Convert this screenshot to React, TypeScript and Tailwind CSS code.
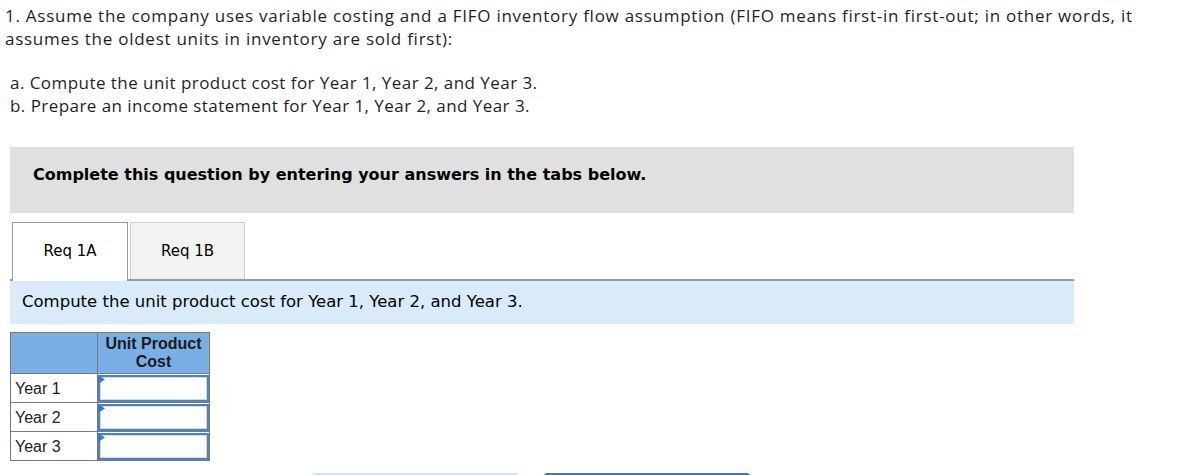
import React from "react";

const rows = ["Year 1", "Year 2", "Year 3"];

function AnswerCell() {
  return (
    <td className="h-[29px] border border-[#7a7a7a] p-0">
      <div className="relative h-[27px] border-2 border-[#4f81bd] bg-white">
        <div className="absolute inset-0 border border-[#c9dcf2]" />
        <svg className="absolute left-[-2px] top-[-2px]" width="8" height="12" viewBox="0 0 8 12">
          <path d="M0 0 L7 4.5 L0 9 Z" fill="#3c78c8" />
        </svg>
      </div>
    </td>
  );
}

export default function App() {
  return (
    <div className="h-[475px] w-[1180px] overflow-hidden bg-white text-[#222]">
      <div className="px-[5px] pt-[4px] font-['Open_Sans',sans-serif] text-[17px] leading-[23px] tracking-[0.45px] text-[#1f1f1f]">
        <p className="whitespace-nowrap tracking-[0.74px]">
          1. Assume the company uses variable costing and a FIFO inventory flow assumption (FIFO means first-in first-out; in other words, it
          <br />
          assumes the oldest units in inventory are sold first):
        </p>
        <p className="mt-[21px] pl-[5px]">a. Compute the unit product cost for Year 1, Year 2, and Year 3.</p>
        <p className="pl-[5px]">b. Prepare an income statement for Year 1, Year 2, and Year 3.</p>
      </div>

      <div className="ml-[10px] mt-[30px] w-[1064px]">
        <div className="flex h-[66px] items-center bg-[#e0e0e0] pb-[10px] pl-[23px] font-['DejaVu_Sans',Verdana,sans-serif] text-[16px] font-bold text-black">
          Complete this question by entering your answers in the tabs below.
        </div>

        <div className="mt-[9px] flex h-[59px] items-end gap-[2px] border-b-2 border-[#999] pl-[2px] font-['DejaVu_Sans',Verdana,sans-serif] text-[15px] text-black">
          <div className="-mb-[2px] flex h-[59px] w-[116px] items-center justify-center border border-b-0 border-[#999] bg-white pb-[2px]">
            Req 1A
          </div>
          <div className="flex h-[57px] w-[115px] items-center justify-center border border-b-0 border-[#ccc] bg-[#f2f2f2]">
            Req 1B
          </div>
        </div>

        <div className="flex h-[43px] items-center bg-[#d9ebf9] pl-[12px] font-['DejaVu_Sans',Verdana,sans-serif] text-[16.5px] text-black">
          Compute the unit product cost for Year 1, Year 2, and Year 3.
        </div>

        <table className="mt-[8px] border-collapse font-['Liberation_Sans',Arial,sans-serif] text-[16px] leading-[18px] text-[#222]">
          <thead>
            <tr className="bg-[#7aafe6]">
              <th className="h-[41px] w-[87px] border border-[#7a7a7a] p-0" />
              <th className="w-[112px] border border-[#7a7a7a] p-0 pb-[1px] text-center align-middle font-bold text-[#1a1a1a]">
                Unit Product
                <br />
                Cost
              </th>
            </tr>
          </thead>
          <tbody>
            {rows.map((r) => (
              <tr key={r}>
                <td className="h-[29px] border border-[#7a7a7a] p-0 pl-[4px] pt-[1px]">{r}</td>
                <AnswerCell />
              </tr>
            ))}
          </tbody>
        </table>
      </div>

      <div className="mt-[12px] flex gap-[25px] pl-[312px]">
        <div className="h-[6px] w-[207px] rounded-t-[3px] bg-[#d6e4f4]" />
        <div className="h-[6px] w-[206px] rounded-t-[3px] bg-[#3a78c0]" />
      </div>
    </div>
  );
}
